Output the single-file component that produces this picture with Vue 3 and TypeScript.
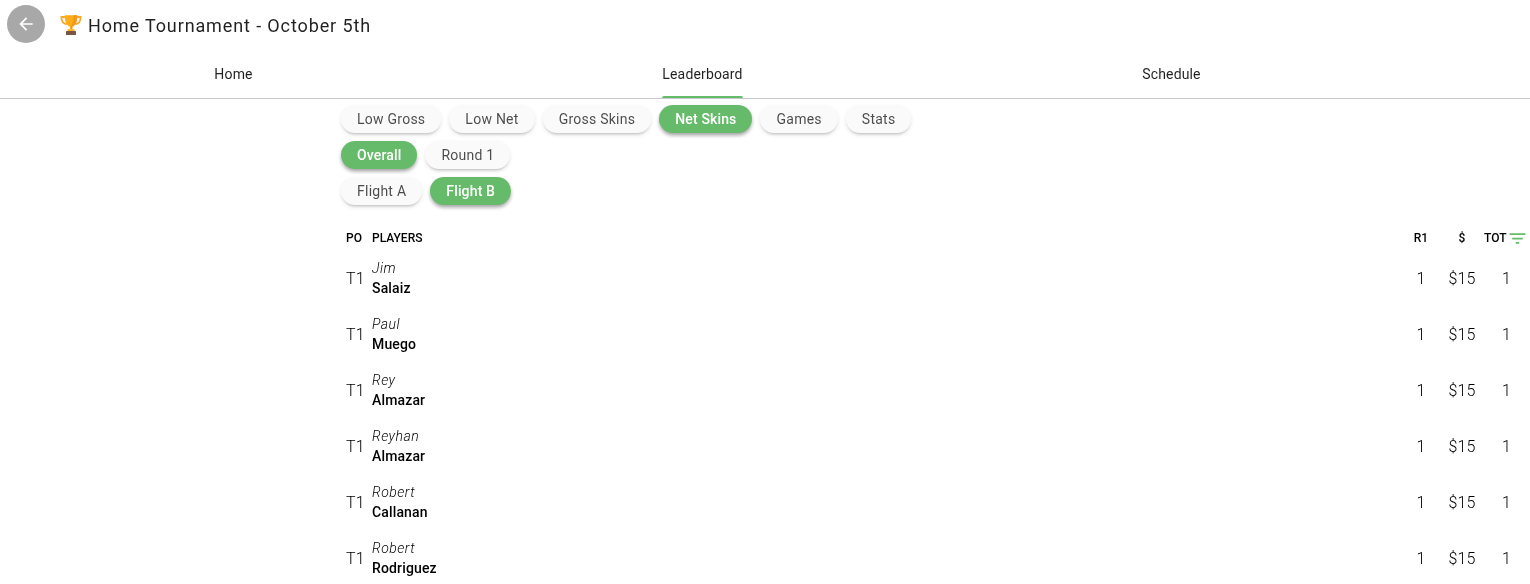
<template>
  <div class="page">
    <header class="top">
      <button class="back" aria-label="Back">
        <svg width="20" height="20" viewBox="0 0 24 24"><path fill="#fff" d="M20 11H7.830l5.590-5.590L12 4l-8 8 8 8 1.410-1.410L7.830 13H20v-2z"/></svg>
      </button>
      <svg class="trophy" width="22" height="22" viewBox="0 0 22 22">
        <path fill="none" stroke="#f9a825" stroke-width="1.800" d="M5.500 3H1.400c0 4 1.400 6.600 5.400 7.400M16.500 3h4.100c0 4-1.400 6.600-5.400 7.400"/>
        <path fill="#fbae17" d="M4.800 1.200h12.400c0 6-1.200 10-4.900 11.400v2.600h-2.600v-2.600C6 11.200 4.800 7.200 4.800 1.200z"/>
        <path fill="#f7941d" d="M13.400 1.200h3.800c0 6-1.200 10-4.900 11.400v2.600h-1.300v-3c1.800-2 2.400-6 2.400-11z"/>
        <rect x="7.500" y="15.200" width="7" height="1.800" fill="#fbae17"/>
        <rect x="6" y="17" width="10" height="4" rx=".5" fill="#795548"/>
      </svg>
      <h1 class="title">Home Tournament - October 5th</h1>
    </header>

    <nav class="tabs">
      <div v-for="t in tabs" :key="t" class="tab" :class="{ on: t === 'Leaderboard' }">
        <span class="tab-label">{{ t }}</span>
      </div>
    </nav>

    <main class="content">
      <div v-for="(row, i) in chipRows" :key="i" class="chips">
        <span v-for="c in row" :key="c.label" class="chip" :class="{ active: c.active }">{{ c.label }}</span>
      </div>

      <div class="table">
        <div class="row head">
          <span class="po">PO</span>
          <span class="name">PLAYERS</span>
          <span class="r1">R1</span>
          <span class="money">$</span>
          <span class="tot">
            TOT
            <svg class="sort" width="21" height="21" viewBox="0 0 24 24"><path fill="#66bb6a" d="M10 18h4v-2h-4v2zM3 6v2h18V6H3zm3 7h12v-2H6v2z"/></svg>
          </span>
        </div>
        <div v-for="p in players" :key="p.first + p.last" class="row">
          <span class="po cell">T1</span>
          <span class="name">
            <em class="first">{{ p.first }}</em>
            <span class="last">{{ p.last }}</span>
          </span>
          <span class="r1 cell">1</span>
          <span class="money cell">$15</span>
          <span class="tot cell">1</span>
        </div>
      </div>
    </main>
  </div>
</template>

<script setup lang="ts">
const tabs = ['Home', 'Leaderboard', 'Schedule']

const chipRows = [
  [
    { label: 'Low Gross' },
    { label: 'Low Net' },
    { label: 'Gross Skins' },
    { label: 'Net Skins', active: true },
    { label: 'Games' },
    { label: 'Stats' }
  ],
  [{ label: 'Overall', active: true }, { label: 'Round 1' }],
  [{ label: 'Flight A' }, { label: 'Flight B', active: true }]
]

const players = [
  { first: 'Jim', last: 'Salaiz' },
  { first: 'Paul', last: 'Muego' },
  { first: 'Rey', last: 'Almazar' },
  { first: 'Reyhan', last: 'Almazar' },
  { first: 'Robert', last: 'Callanan' },
  { first: 'Robert', last: 'Rodriguez' }
]
</script>

<style>
html,
body {
  overflow: hidden;
  background: #fff;
}
</style>

<style scoped>
.page {
  height: 584px;
  overflow: hidden;
  font-family: Roboto, "Liberation Sans", sans-serif;
  color: rgba(0, 0, 0, 0.87);
  will-change: transform;
}

.top {
  display: flex;
  align-items: center;
  height: 50px;
  padding-left: 7px;
}

.back {
  display: flex;
  align-items: center;
  justify-content: center;
  width: 38px;
  height: 38px;
  margin-top: -2px;
  padding: 0;
  border: 0;
  border-radius: 50%;
  background: #a8a8a8;
}

.trophy {
  margin-left: 15px;
  margin-right: 6px;
}

.title {
  margin: 0;
  font-size: 18px;
  font-weight: 400;
  letter-spacing: 0.88px;
}

.tabs {
  display: grid;
  grid-template-columns: repeat(3, 469px);
  height: 49px;
  margin-left: -1px;
  border-bottom: 1px solid #c8c8d0;
  box-sizing: border-box;
  width: 1531px;
}

.tab {
  display: flex;
  justify-content: center;
  font-size: 14px;
  letter-spacing: 0.15px;
}

.tab-label {
  position: relative;
  height: 100%;
  box-sizing: border-box;
  padding-top: 16px;
}

.tab.on .tab-label::after {
  content: "";
  position: absolute;
  left: 0;
  right: 0;
  bottom: 0;
  height: 2px;
  border-radius: 2px 2px 0 0;
  background: #66bb6a;
}

.content {
  padding: 6px 0 0 341px;
}

.chips {
  display: flex;
  gap: 8px;
  height: 28px;
  margin-bottom: 8px;
}

.chip {
  display: flex;
  align-items: center;
  height: 28px;
  padding: 0 16px;
  border-radius: 14px;
  background: #fafafa;
  color: rgba(0, 0, 0, 0.7);
  font-size: 14px;
  letter-spacing: 0.25px;
  box-shadow: 0 3px 3px -2px rgba(0, 0, 0, 0.2), 0 2px 4px 0 rgba(0, 0, 0, 0.1);
}

.chip.active {
  background: #66bb6a;
  color: #fff;
  font-weight: 500;
  letter-spacing: 0.15px;
  box-shadow: 0 3px 4px -1px rgba(0, 0, 0, 0.3), 0 2px 4px 0 rgba(0, 0, 0, 0.14);
}

.table {
  padding-top: 13px;
}

.row {
  display: grid;
  grid-template-columns: 31px 1fr 38px 44px 46px;
  align-items: center;
  height: 56px;
  color: #000;
}

.row.head {
  height: 24px;
  font-size: 12px;
  font-weight: 500;
}

.po {
  padding-left: 5px;
}

.cell {
  font-size: 16px;
  font-weight: 300;
  letter-spacing: 0.15px;
}

.name {
  display: flex;
  flex-direction: column;
}

.first {
  font-size: 14px;
  font-weight: 300;
  line-height: 20px;
  letter-spacing: 0.5px;
}

.last {
  font-size: 14px;
  font-weight: 500;
  line-height: 20px;
  letter-spacing: 0.15px;
}

.r1,
.money {
  text-align: center;
}

.tot {
  display: flex;
  align-items: center;
}

.tot.cell {
  padding-left: 18px;
}

.sort {
  margin-left: 1px;
}
</style>
